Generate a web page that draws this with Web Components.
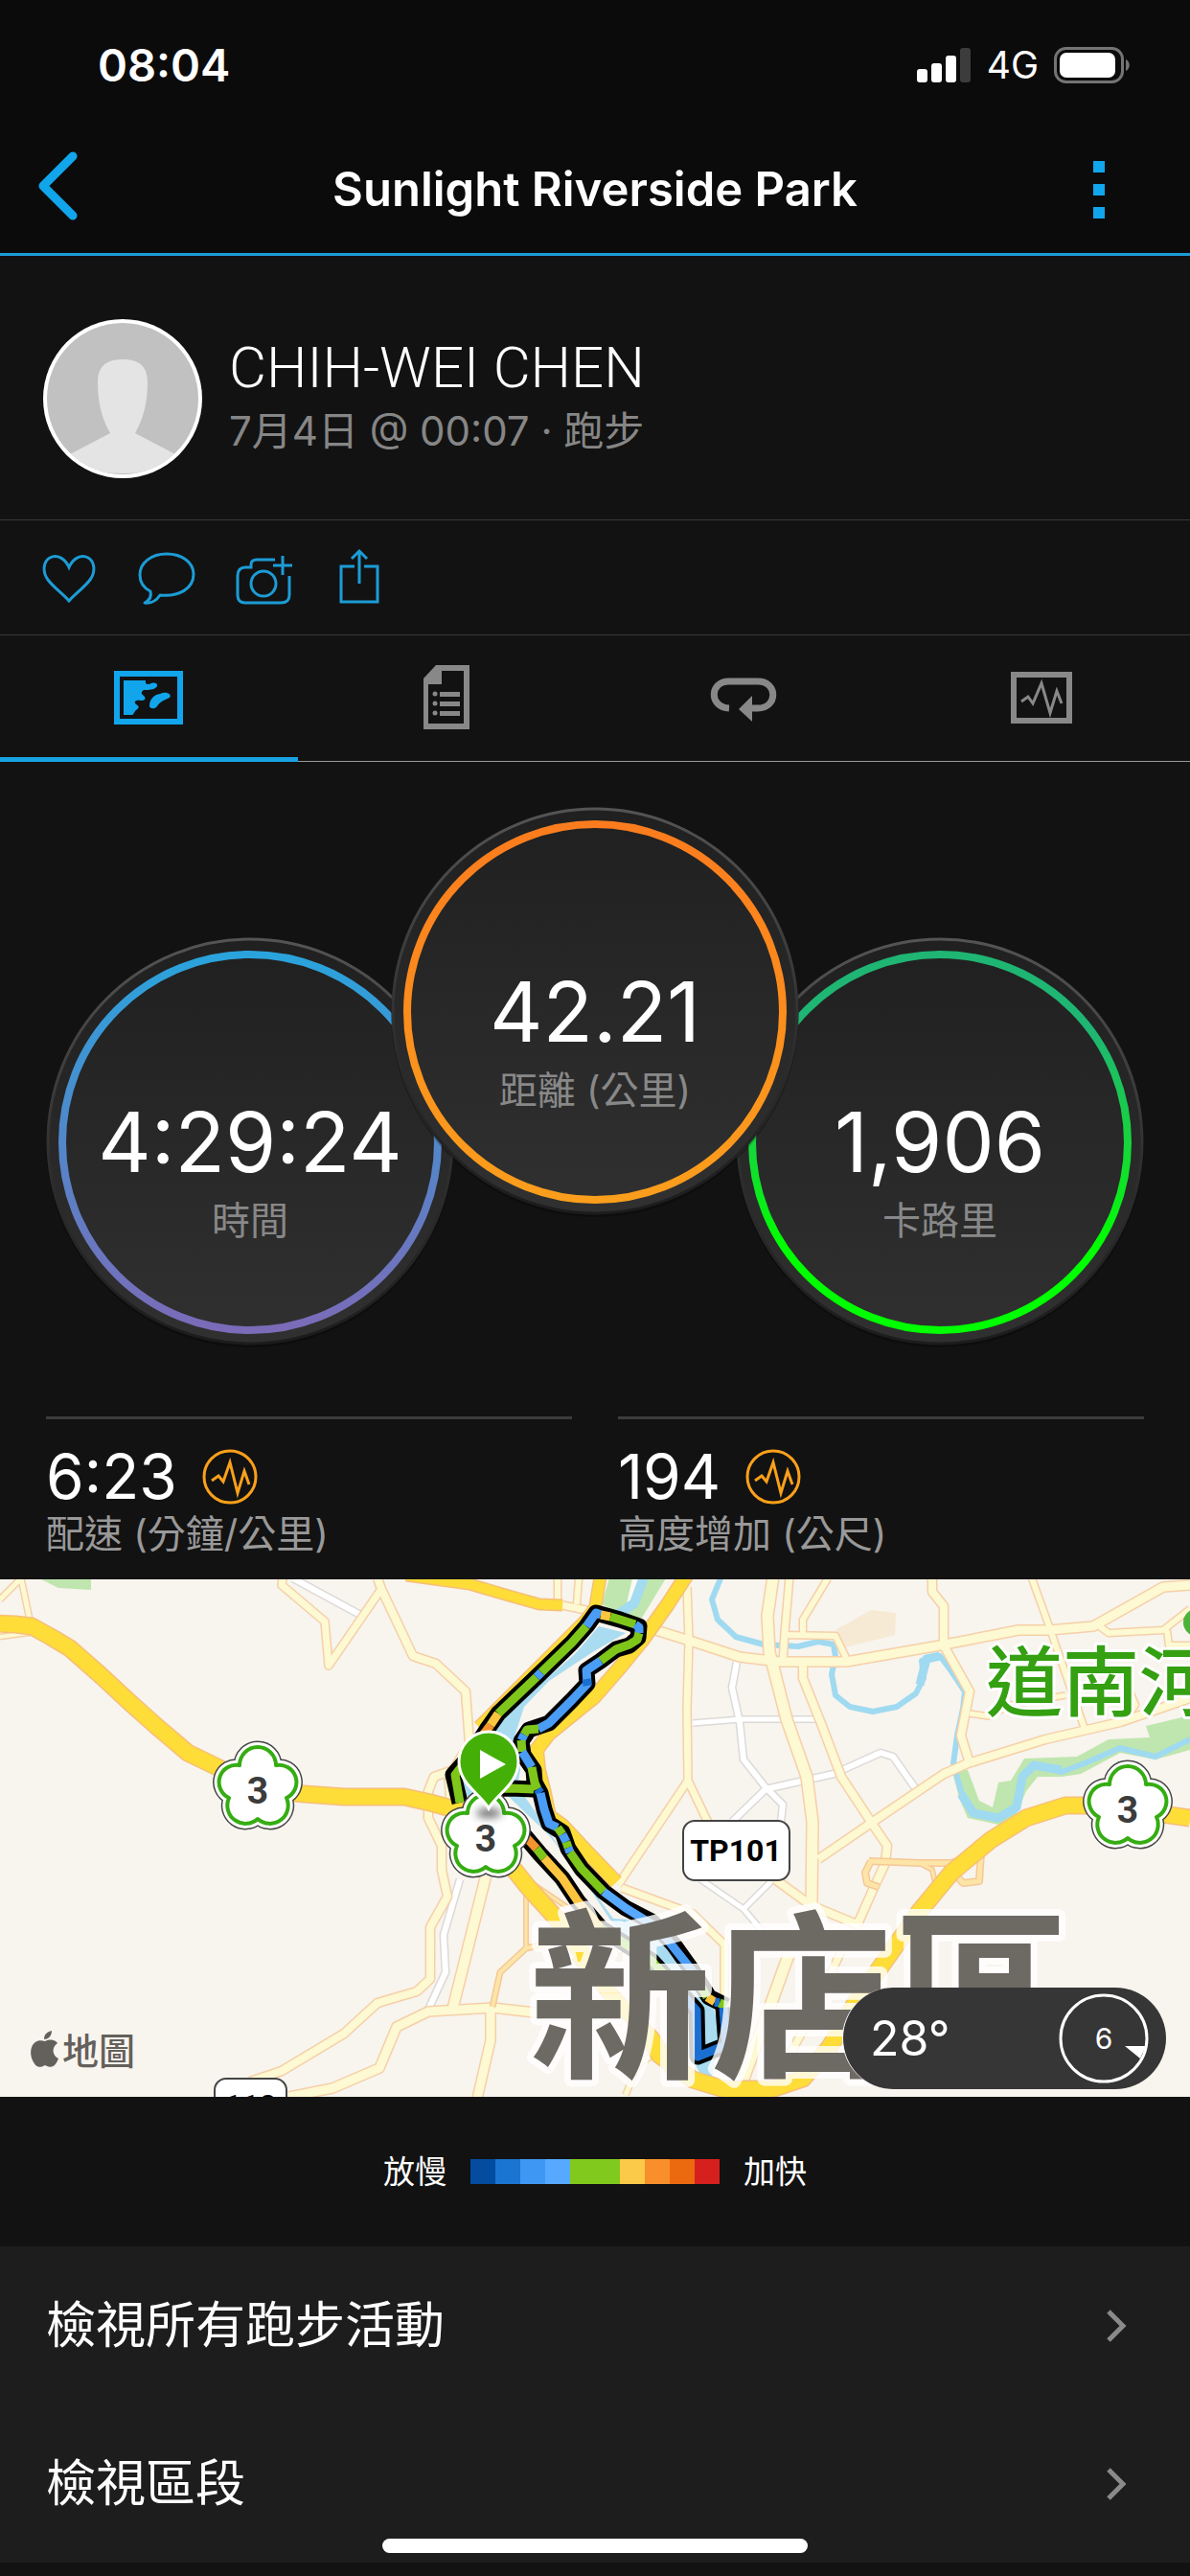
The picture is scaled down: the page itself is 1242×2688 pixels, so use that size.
<!DOCTYPE html>
<html lang="zh-Hant">
<head>
<meta charset="utf-8">
<meta name="viewport" content="width=device-width, initial-scale=1">
<title>Sunlight Riverside Park</title>
<style>
  body { margin: 0; background: #121212; color: #fff; font-family: Inter, "Noto Sans CJK TC", sans-serif; }
</style>
</head>
<body>
<activity-page>
  <status-bar slot="header" time="08:04" network="4G"></status-bar>
  <nav-bar slot="header">Sunlight Riverside Park</nav-bar>
  <athlete-card>
    <span slot="name">CHIH-WEI CHEN</span>
    <span slot="meta">7月4日 @ 00:07 · 跑步</span>
  </athlete-card>
  <action-row></action-row>
  <tab-strip></tab-strip>
  <gauge-group>
    <round-gauge from="#2aa3dc" to="#7b6bb8" value="4:29:24">時間</round-gauge>
    <round-gauge class="main" from="#fb7c1e" to="#fb9e1c" value="42.21">距離 (公里)</round-gauge>
    <round-gauge from="#1fb573" mid="#17d43c" to="#00ff00" value="1,906">卡路里</round-gauge>
  </gauge-group>
  <stat-pair>
    <stat-item value="6:23">配速 (分鐘/公里)</stat-item>
    <stat-item value="194">高度增加 (公尺)</stat-item>
  </stat-pair>
  <route-map><weather-pill slot="overlay" wind="6">28°</weather-pill></route-map>
  <pace-legend><span slot="slow">放慢</span><span slot="fast">加快</span></pace-legend>
  <link-list>
    <link-row>檢視所有跑步活動</link-row>
    <link-row>檢視區段</link-row>
  </link-list>
</activity-page>

<script>
const define = (name, render) => customElements.define(name, class extends HTMLElement {
  connectedCallback() {
    if (this.shadowRoot) return;
    this.attachShadow({ mode: 'open' }).innerHTML = render(this);
  }
});
const reset = `button{appearance:none;background:none;border:0;padding:0;margin:0;font:inherit;color:inherit;display:block;cursor:pointer} svg{display:block}`;
const pulse = 'M10 33 L17 28 L22 34 L29 14 L37 46 L44 23 L49 37';

define('activity-page', () => `
<style>
  :host{display:flex;flex-direction:column;min-height:100vh;position:relative}
  header{background:#0b0b0b;border-bottom:3px solid #1c9cd6}
  main{flex:1}
  .home{position:absolute;left:50%;bottom:24px;width:444px;height:15px;margin-left:-222px;border-radius:8px;background:#fff}
</style>
<header><slot name="header"></slot></header>
<main><slot></slot></main>
<div class="home"></div>`);

define('status-bar', el => `
<style>
  :host{display:flex;justify-content:space-between;align-items:center;height:128px;padding:4px 62px 0 102px}
  .time{font-size:47px;font-weight:600;line-height:56px}
  .right{display:flex;align-items:center;gap:16px;font-size:39px;font-weight:400;line-height:48px}
  svg{display:block}
</style>
<span class="time">${el.getAttribute('time')}</span>
<span class="right">
  <svg width="57" height="36" viewBox="0 0 57 36" fill="#fff"><rect y="22" width="11" height="14" rx="3"/><rect x="15" y="16" width="11" height="20" rx="3"/><rect x="30" y="8" width="11" height="28" rx="3"/><rect x="45" width="11" height="36" rx="3" fill="#3c3c3c"/></svg>
  <span>${el.getAttribute('network')}</span>
  <svg width="80" height="38" viewBox="0 0 80 38"><rect x="1.5" y="1.5" width="70" height="35" rx="11" fill="none" stroke="#747474" stroke-width="3"/><rect x="6" y="6" width="58" height="26" rx="7" fill="#fff"/><path d="M75 13c5 2 5 10 0 12z" fill="#747474"/></svg>
</span>`);

define('nav-bar', () => `
<style>${reset}
  :host{display:grid;grid-template-columns:150px 1fr 150px;align-items:center;height:132px}
  h1{margin:0;text-align:center;font-size:49px;font-weight:600;line-height:60px}
  .back{padding:0 0 8px 38px}
  .more{justify-self:end;padding-right:88px}
</style>
<button class="back" aria-label="Back"><svg width="44" height="74" viewBox="0 0 44 74" fill="none" stroke="#11a5eb" stroke-width="9" stroke-linecap="round" stroke-linejoin="round"><path d="M38 6 L7 37 L38 68"/></svg></button>
<h1><slot></slot></h1>
<button class="more" aria-label="More"><svg width="14" height="60" viewBox="0 0 14 60" fill="#11a5eb"><path d="M1 0h12v12H1zM1 24h12v12H1zM1 48h12v12H1z"/></svg></button>`);

define('athlete-card', () => `
<style>
  :host{display:flex;align-items:center;gap:28px;padding:66px 45px 43px;border-bottom:1px solid #383838}
  svg{display:block;flex:none}
  .text{display:flex;flex-direction:column}
  .name{font-family:Roboto,sans-serif;font-size:60px;font-weight:300;line-height:68px}
  .meta{font-size:42px;line-height:64px;color:#868686}
</style>
<svg width="166" height="166" viewBox="0 0 166 166"><defs><clipPath id="disc"><circle cx="83" cy="83" r="79"/></clipPath></defs>
 <circle cx="83" cy="83" r="83" fill="#fff"/><circle cx="83" cy="83" r="79" fill="#c1c1c1"/>
 <g clip-path="url(#disc)"><path d="M57 66c0-16 8-24 26-24s26 8 26 24c0 17-3 36-13 53l42 22v8c-15 9-34 12-55 12s-40-3-55-12v-8l42-22c-10-17-13-36-13-53z" fill="#e4e4e4"/></g></svg>
<div class="text"><div class="name"><slot name="name"></slot></div><div class="meta"><slot name="meta"></slot></div></div>`);

define('action-row', () => `
<style>${reset}
  :host{display:flex;align-items:center;gap:41px;height:119px;padding:0 42px;border-bottom:1px solid #383838}
  svg{fill:none;stroke:#1c9cd6;stroke-width:3;overflow:visible}
</style>
<button aria-label="Like"><svg width="60" height="58" viewBox="0 0 60 58"><path d="M30 53 C24 46 14 39 8 31 C2 23 3 12 10 8 C18 4 26 9 30 18 C34 9 42 4 50 8 C57 12 58 23 52 31 C46 39 36 46 30 53Z"/></svg></button>
<button aria-label="Comment"><svg width="60" height="58" viewBox="0 0 60 58"><path d="M8 55 C14 52 15 47 14 43 C6 39 3 33 3 26 C3 13 15 4 31 4 C47 4 59 13 59 25 C59 40 44 49 24 47 C20 53 14 56 8 55Z" stroke-linejoin="round"/></svg></button>
<button aria-label="Add photo"><svg width="60" height="58" viewBox="0 0 60 58"><path d="M43 10H24Q18 10 18 15V18H12Q4 18 4 27V47Q4 55 12 55H49Q58 55 58 47V27"/><circle cx="31" cy="35" r="13"/><path d="M51 6V26M41 16H61"/></svg></button>
<button aria-label="Share"><svg width="60" height="58" viewBox="0 0 60 58"><path d="M25 17H11V54H49V17H35M30 35V1M22 9L30 1L38 9"/></svg></button>`);

define('tab-strip', () => `
<style>${reset}
  :host{display:grid;grid-template-columns:repeat(4,1fr);height:132px}
  button{display:grid;place-items:center;border-bottom:1px solid #999;padding-bottom:2px;color:#888}
  .on{border-bottom:5px solid #18a2e4;color:#11a5eb;padding:2px 0 0}
</style>
<button class="on" aria-label="Map"><svg width="72" height="56" viewBox="0 0 72 56"><path d="M3 3H69V53H3Z" fill="none" stroke="currentColor" stroke-width="6"/><path fill="currentColor" d="M10 10H33C32 14 35 15 39 13C45 11 47 16 43 18C40 20 34 20 31 20C28 22 28 24 31 26C34 29 32 31 28 31C23 30 20 32 23 35C27 37 26 39 23 41C21 43 20 46 19 46H10ZM37 37C37 29 42 25 48 24C54 21 61 24 58 28C52 31 48 32 45 37C42 41 37 39 37 37Z"/></svg></button>
<button aria-label="Details"><svg width="50" height="67" viewBox="0 0 50 67" fill="currentColor"><path fill-rule="evenodd" d="M14 0H49V67H1V14ZM20 6V20H6V61H43V6Z"/><circle cx="13" cy="30" r="2.5"/><circle cx="13" cy="40" r="2.5"/><circle cx="13" cy="50" r="2.5"/><path d="M18 28H39V33H18ZM18 38H39V43H18ZM18 48H39V53H18Z"/></svg></button>
<button aria-label="Laps"><svg width="70" height="50" viewBox="0 0 70 50"><path d="M20 36C-1 35 -1 8 20 8H50C71 8 71 36 50 36H44" fill="none" stroke="currentColor" stroke-width="7"/><path d="M30 37L44 23V50Z" fill="currentColor"/></svg></button>
<button aria-label="Charts"><svg width="64" height="54" viewBox="0 0 64 54" fill="none" stroke="currentColor"><path d="M3 3H61V51H3Z" stroke-width="6"/><path d="M11 31L18 26L23 33L32 12L41 43L48 20L53 33" stroke-width="3"/></svg></button>`);

define('gauge-group', () => `
<style>
  :host{display:flex;justify-content:center;align-items:flex-start;padding:48px 48px 75px}
  ::slotted(*){margin:136px -32px 0}
  ::slotted(.main){margin-top:0;z-index:1}
</style><slot></slot>`);

define('round-gauge', el => {
  const a = el.getAttribute('from'), b = el.getAttribute('to'), m = el.getAttribute('mid');
  return `
<style>
  :host{display:grid;width:424px;height:424px;position:relative}
  svg,.text{grid-area:1/1}
  svg{display:block;overflow:visible}
  .text{display:flex;flex-direction:column;align-items:center;padding-top:160px}
  .value{font-size:86px;line-height:106px;white-space:nowrap}
  .label{font-size:40px;line-height:58px;color:#888}
</style>
<svg width="424" height="424" viewBox="0 0 424 424" aria-hidden="true"><defs>
 <linearGradient id="ring" x2="0" y2="1"><stop stop-color="${a}"/>${m ? `<stop offset=".2" stop-color="${a}"/><stop offset=".5" stop-color="${m}"/><stop offset=".78" stop-color="${b}"/>` : ''}<stop offset="1" stop-color="${b}"/></linearGradient>
 <linearGradient id="rim" x2="0" y2="1"><stop stop-color="#545454"/><stop offset=".55" stop-color="#2f2f2f"/><stop offset="1" stop-color="#1c1c1c"/></linearGradient>
 <linearGradient id="face" x2="0" y2="1"><stop stop-color="#202020"/><stop offset="1" stop-color="#303030"/></linearGradient></defs>
 <circle cx="212" cy="214" r="213" fill="#000" opacity=".25"/>
 <circle cx="212" cy="212" r="211" fill="url(#face)" stroke="url(#rim)" stroke-width="3"/>
 <circle cx="212" cy="213" r="196" fill="none" stroke="url(#ring)" stroke-width="8"/></svg>
<div class="text"><span class="value">${el.getAttribute('value')}</span><span class="label"><slot></slot></span></div>`;
});

define('stat-pair', () => `
<style>:host{display:grid;grid-template-columns:1fr 1fr;gap:48px;padding:0 48px 24px}</style><slot></slot>`);

define('stat-item', el => `
<style>
  :host{display:block;border-top:3px solid #3c3c3c;padding-top:23px}
  .top{display:flex;align-items:center;gap:26px;height:74px}
  .value{font-size:64px;font-weight:400;line-height:74px}
  .label{font-size:40px;line-height:46px;color:#999}
  svg{display:block}
</style>
<div class="top"><span class="value">${el.getAttribute('value')}</span><svg width="58" height="58" viewBox="0 0 58 58" fill="none" stroke="#fba01a" stroke-width="3"><circle cx="29" cy="29" r="27"/><path d="${pulse}"/></svg></div>
<div class="label"><slot></slot></div>`);

/* Map data: every line lists its points in one of three survey grids. */
const grids = {
  W: (x, y) => [x / 2.45, y / 2.8 - 8],
  E: (x, y) => [600 + x / 2.442, y / 2.8 - 8],
  C: (x, y) => [440 + x / 3, y / 2.904 - 8]
};
const pts = (grid, text) => text.split(' ').map(p => grids[grid](...p.split(',').map(Number)).map(Math.round).join(',')).join(' ');
const line = (grid, text, width, color) => `<polyline points="${pts(grid, text)}" stroke="${color}" stroke-width="${width}"/>`;
const area = (grid, text, color) => `<polygon points="${pts(grid, text)}" fill="${color}"/>`;

const white = [
  ['E', '412,262 400,340 420,440 430,550 485,630 530,680 525,730', 7], ['E', '300,442 420,430 620,430', 6],
  ['E', '400,730 485,635 660,590 780,530 810,540 870,635', 7], ['E', '320,900 430,985 500,905', 6], ['E', '430,985 520,1110', 6],
  ['W', '750,20 920,125', 7], ['W', '1175,900 1135,1060 1140,1170 1095,1280', 7]
];
const minor = [
  ['E', '285,45 290,200 285,400 287,610 345,745', 8], ['E', '287,610 110,915', 8],
  ['E', '190,165 300,205 420,250 520,262 690,262 930,215 1130,172 1210,170 1320,160 1500,45 1568,40', 10],
  ['E', '505,15 490,130 495,235 540,430 590,600 605,730 603,970', 12], ['E', '548,15 535,180 530,262', 8],
  ['E', '645,20 580,140 580,185', 7], ['E', '530,185 665,187 695,262', 7],
  ['E', '580,262 580,310 630,450 680,600 760,740 795,800 790,850 760,930 720,1030', 9],
  ['E', '912,20 912,60 940,100 940,215 1005,350 985,480 1005,560', 9], ['E', '1165,20 1210,160 1300,460', 7],
  ['E', '620,840 760,730 940,590 1000,560 1200,490 1390,440 1568,370', 9], ['E', '1005,415 1055,422 1110,390 1250,360', 6],
  ['E', '1330,155 1360,180 1500,172 1568,110', 7], ['E', '1510,172 1515,215 1568,215', 7], ['E', '1400,440 1430,390 1410,330', 5],
  ['E', '120,925 300,1000 380,1090 382,1300', 8], ['E', '510,900 600,975 730,1035', 9], ['E', '545,1120 500,1260 430,1480', 12],
  ['E', '680,1110 600,1300 530,1450', 8], ['E', '130,1530 160,1440 200,1410', 6],
  ['W', '965,20 975,50 1055,245 1115,270 1190,350 1200,500 1160,580 1110,600 1095,640 1095,720 1130,800 1130,870 1145,950 1100,1040 1100,1190 1065,1225 965,1260 880,1350 720,1460 640,1490', 9],
  ['W', '975,50 840,275 830,145 720,40 722,20', 8], ['W', '1145,580 1150,660 1190,700', 7],
  ['W', '1243,890 1160,1270', 11], ['W', '740,1535 850,1510 970,1450 1015,1330 1095,1285 1260,1275 1390,1290', 10],
  ['W', '1255,1280 1255,1370 1220,1540', 10], ['W', '1427,20 1427,90', 7], ['W', '1480,20 1475,95', 7], ['W', '1437,97 1510,115', 8],
  ['W', '0,80 55,20 75,140', 6], ['W', '0,190 90,175', 5]
];
const ramps = [
  ['W', '1260,1270 1280,1170 1345,1100 1400,1085', 5], ['W', '1320,880 1345,940 1345,1100', 4], ['W', '1345,900 1450,980', 4],
  ['E', '750,845 880,852 960,850 1035,820 1030,905 990,910 960,870', 6], ['E', '755,845 740,880 745,910 775,920', 6], ['E', '880,852 910,870 920,920', 4]
];
const major = [
  ['W', '-10,152 40,153 80,160 130,190 180,225 260,305 330,380 400,450 480,528 560,575 660,635 780,650 880,657 1035,657 1100,675 1180,700 1243,780 1300,850 1350,920 1420,1010 1500,1130', 17],
  ['C', '490,1160 600,1290 720,1410 790,1510', 15],
  ['E', '190,1360 215,1410 300,1485 380,1512 500,1512 580,1480 650,1390 720,1250 800,1120 880,990 960,880 1060,785 1150,720 1250,683 1300,683 1409,695 1568,720', 17],
  ['W', '1040,10 1200,35 1300,70 1380,95 1437,97', 11], ['C', '560,10 542,110 510,150 180,470', 12],
  ['C', '830,10 770,100 690,210 620,290 540,380 400,490 360,540 365,600 385,670 400,740 440,770 520,850 610,940', 14]
];
const roads = (set, color, casing) => set.map(r => line(r[0], r[1], r[2] + 2, casing)).join('') + set.map(r => line(r[0], r[1], r[2] - 1, color)).join('');

const track = [
  '120,700 100,615 150,560 205,480 240,430 370,310 470,215 515,165 545,125 620,145 680,165 678,200 650,225 610,235 560,270 515,300 520,340 470,390 400,460 335,480 312,515 318,555 350,600 355,640 372,670 385,720 400,765 440,790 460,840 500,900 570,970 640,1020 720,1060 790,1130 850,1210 900,1290 955,1315',
  '350,660 280,655 210,660', '320,800 370,855 440,930 490,1000 560,1080 720,1180 860,1330 865,1470 955,1435 945,1320'
];
const G = '#7fc61b', B = '#4a9df5', L = '#57a9ff', D = '#1a6fd0', Y = '#fbc540', O = '#f5942e';
const pace = [
  [G, '120,700 105,615 150,560 190,500'], [O, '190,500 215,465'], [Y, '215,465 240,430'], [G, '240,430 360,320'], [B, '360,320 375,305'], [G, '375,305 470,215 515,165'],
  [B, '515,165 545,125 560,130'], [Y, '560,130 590,137'], [G, '590,137 620,145 668,160'], [B, '668,160 682,167 680,185'], [G, '680,185 675,205 650,220 610,235 560,270'],
  [B, '560,270 515,300 520,340 470,390 400,460 365,475'], [D, '517,325 518,345'], [G, '365,475 330,480 320,495'], [B, '320,495 313,510'], [G, '313,510 316,545'], [B, '316,545 345,592'],
  [G, '345,592 355,640 362,660'], [G, '350,660 280,655 210,660'], [D, '362,660 372,670'], [B, '372,670 385,720 400,765 425,775'], [G, '425,775 442,795'], [B, '442,795 452,818'], [G, '452,818 458,835'],
  [B, '458,835 464,850'], [G, '464,850 500,900 570,970'], [L, '570,970 640,1020 740,1080'], [B, '740,1080 850,1210'], [G, '850,1210 895,1290'], [Y, '895,1290 918,1303'], [D, '918,1303 932,1308'], [G, '932,1308 955,1315'],
  [O, '320,800 360,840'], [G, '360,840 385,868'], [Y, '385,868 440,930 490,1000 560,1080'], [G, '560,1080 720,1180 760,1220'], [D, '760,1220 860,1330 865,1470 955,1435 945,1320']
];
const flower = 'M-19-22A19 19 0 0 1 19-22A18 18 0 0 1 30 12A19 19 0 0 1 0 34A19 19 0 0 1-30 12A18 18 0 0 1-19-22Z';
const shield = (x, y) => `<g transform="translate(${x} ${y})" stroke-linejoin="round"><path d="${flower}" stroke="#444" stroke-width="13" fill="#444"/><path d="${flower}" stroke="#fff" stroke-width="10" fill="#fff"/><path d="${flower}" stroke="#35ad12" stroke-width="4" fill="#fff"/><text class="num" y="18">3</text></g>`;

define('route-map', () => `
<style>
  :host{display:block;position:relative;height:540px;overflow:hidden;background:#f8f4ee}
  svg{display:block;width:100%;height:100%}
  text{font-family:"Noto Sans CJK TC",sans-serif;paint-order:stroke;stroke-linejoin:round}
  .num{font:700 39px Roboto,sans-serif;fill:#3c3c3c;text-anchor:middle}
  .code{font:700 32px Roboto,sans-serif;fill:#000;text-anchor:middle}
  .city{font-size:190px;font-weight:700;fill:#6d6963;stroke:#fff;stroke-opacity:.8;stroke-width:14px}
  .river{font-size:80px;font-weight:500;fill:#34a012;stroke:#fff;stroke-width:6px}
  .credit{font-size:38px;font-weight:500;fill:#64605b}
  ::slotted(*){position:absolute;right:25px;bottom:8px}
</style>
<svg viewBox="0 0 1242 540" preserveAspectRatio="xMidYMid slice">
 <defs><filter id="soft" x="-50%" y="-100%" width="200%" height="300%"><feGaussianBlur stdDeviation="4"/></filter></defs>
 ${area('W', '90,15 232,15 232,52 150,47', '#bfe6ae')}
 ${area('C', '590,10 565,100 640,140 690,140 765,20', '#bfe6ae')}
 ${area('E', '960,575 1000,580 1030,670 1065,690 1080,615 1110,610 1145,545 1280,540 1360,490 1465,485 1455,450 1568,420 1568,520 1480,550 1390,530 1290,590 1240,600 1180,600 1150,640 1120,720 1080,738 1000,720 980,660', '#bfe6ae')}
 ${area('E', '665,170 755,112 817,120 815,185 680,225', '#f6ead4')}
 ${area('C', '555,165 640,185 540,240 400,330 320,410 290,500 310,600 300,650 380,760 440,850 560,1000 600,1050 740,1060 840,1200 900,1280 940,1400 900,1570 860,1500 830,1350 760,1200 600,1070 520,950 400,800 270,680 90,680 110,600 220,480 300,400 480,250', '#a9dcf0')}
 <g fill="none" stroke-linejoin="round">
  ${line('C', '672,10 650,100', 6, '#fbf9f6')}${line('C', '700,10 665,95 600,140', 10, '#a3dbf0')}
  ${line('E', '370,20 350,80 365,140 410,190 480,212 570,218 620,205 660,212 665,250 655,300 665,360 700,395 760,410 820,395 870,355 890,310 885,260 930,245 960,290 995,350 990,400 975,480 965,560 985,640 1010,700 1080,720 1120,690 1140,600 1170,565 1240,585 1300,560 1390,515 1480,540 1568,490', 6, '#9fdaf1')}
  ${line('E', '880,330 895,255 930,245', 9, '#9fdaf1')}${line('E', '985,650 1015,705 1080,720 1125,690 1140,600 1170,565 1240,580', 9, '#9fdaf1')}
  ${roads(white, '#fff', '#dcdad8')}
  ${roads(minor, '#fdf9d2', '#f5d0a8')}
  ${roads(ramps, '#fde5a8', '#f5c894')}
  ${roads(major, '#fedd38', '#f6bf78')}
  ${track.map(t => line('C', t, 17, '#000')).join('')}
  ${pace.map(p => line('C', p[1], 9, p[0])).join('')}
 </g>
 <circle cx="1249" cy="45" r="14" fill="#4bb33a"/>
 <text class="river" x="1029" y="136">道南河</text>
 <text class="city" x="552" y="506">新店區</text>
 ${shield(269, 216)}${shield(507, 266)}${shield(1177, 236)}
 <rect x="713" y="252" width="111" height="62" rx="12" fill="#fff" stroke="#444" stroke-width="2"/><text class="code" x="768" y="294">TP101</text>
 <rect x="224" y="521" width="75" height="60" rx="12" fill="#fff" stroke="#444" stroke-width="2"/><text class="code" x="261" y="560">110</text>
 <ellipse cx="510" cy="244" rx="13" ry="5" fill="#333" opacity=".7" filter="url(#soft)"/>
 <path d="M510 239C502 224 479 214 479 190A31 31 0 0 1 541 190C541 214 518 224 510 239Z" fill="#44b007" stroke="#fff" stroke-width="3"/><path d="M501 178V208L528 193Z" fill="#fff"/>
 <path fill="#64605b" d="M47 482C53 479 58 481 60 484C53 489 55 497 61 500C58 508 54 511 47 507C40 511 37 508 34 502C29 490 35 478 47 482ZM46 480C46 474 50 472 54 471C54 477 50 480 46 480Z"/>
 <text class="credit" x="65" y="506">地圖</text>
</svg>
<slot name="overlay"></slot>`);

define('weather-pill', el => `
<style>
  :host{display:flex;box-sizing:border-box;align-items:center;justify-content:space-between;width:338px;height:106px;padding:0 18px 0 28px;border-radius:53px;background:#363636;border-left:1px solid #fff;font-size:50px;font-weight:400;line-height:60px}
  .dial{display:grid;place-items:center;font-size:30px}
  .dial>*{grid-area:1/1}
</style>
<span><slot></slot></span>
<span class="dial"><svg width="94" height="94" viewBox="0 0 94 94"><circle cx="47" cy="47" r="45" fill="none" stroke="#fff" stroke-width="3"/><path d="M69 55L91 55L85 68Z" fill="#fff"/></svg><span>${el.getAttribute('wind')}</span></span>`);

define('pace-legend', () => `
<style>
  :host{display:flex;justify-content:center;align-items:center;gap:25px;height:156px;font-size:33px;line-height:40px}
  .scale{display:flex}
  i{width:26px;height:26px}
</style>
<slot name="slow"></slot>
<span class="scale">${['#034ca0', '#1a75d2', '#3f97f4', '#57a9ff', '#81c91c', '#81c91c', '#fbca49', '#f98f2a', '#ec6a0f', '#d6201e'].map(c => `<i style="background:${c}"></i>`).join('')}</span>
<slot name="fast"></slot>`);

define('link-list', () => `<style>:host{display:block;background:#1d1d1d}</style><nav><slot></slot></nav>`);

define('link-row', () => `
<style>
  :host{display:block}
  a{display:flex;align-items:center;justify-content:space-between;height:165px;padding:0 65px 0 48px;color:#fff;text-decoration:none;font-size:52px;line-height:72px}
  svg{display:block}
</style>
<a href="#"><slot></slot><svg width="24" height="36" viewBox="0 0 24 36" fill="none" stroke="#8a8a8a" stroke-width="5"><path d="M4 3L19 18L4 33"/></svg></a>`);
</script>
</body>
</html>
